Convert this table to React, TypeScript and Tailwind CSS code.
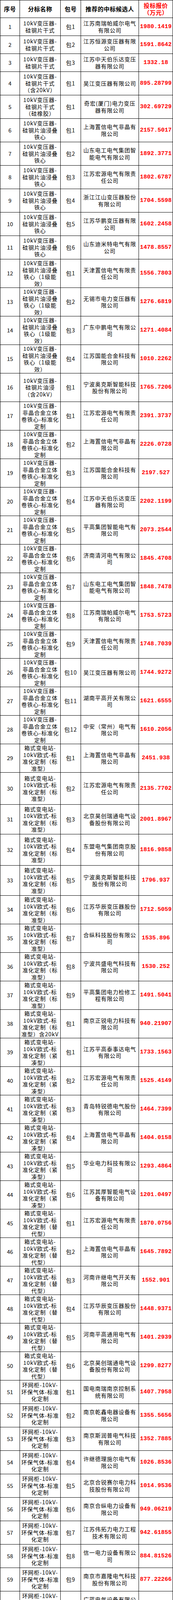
import React from "react";

type Row = [number, string, string, string, string];

const G_A = "10kV变压器-|硅钢片干式";
const G_OIL = "10kV变压器-|硅钢片油浸叠|铁心";
const G_OIL1 = "10kV变压器-|硅钢片油浸叠|铁心（1级能|效）";
const G_AM = "10kV变压器-|非晶合金立体|卷铁心-标准化|定制";
const G_BX = "箱式变电站-|10kV欧式-标|准化定制（标|准型）";
const G_JC = "箱式变电站-|10kV欧式-标|准化定制（紧|凑型）";
const G_TD = "箱式变电站-|10kV欧式-标|准化定制（替|代型）";
const G_HW = "环网柜-10kV-|环保气体-标准|化定制";
const G_HWZ = "环网柜-10kV-|环保气体-标准|化定制（含站|用变柜）";
const G_RH = "一二次融合成|套环网箱-环保|气体-标准化定|制";
const G_RHJ = "一二次融合成|套环网箱-环保|气体-标准化定|制（紧凑型）";

const rows: Row[] = [
  [1, G_A, "包1", "江苏南瑞帕威尔电气|有限公司", "1980.1419"],
  [2, G_A, "包2", "江苏恒源变压器有限|公司", "1591.8642"],
  [3, G_A, "包3", "江苏中天伯乐达变压|器有限公司", "1332.18"],
  [4, "10kV变压器-|硅钢片干式|（含20kV）", "包1", "吴江变压器有限公司", "895.28799"],
  [5, "10kV变压器-|硅钢片干式|（硅橡胶）", "包1", "奇宏(厦门)电力变压|器有限公司", "302.69729"],
  [6, G_OIL, "包1", "上海置信电气非晶有|限公司", "2157.5017"],
  [7, G_OIL, "包2", "山东电工电气集团智|能电气有限公司", "1892.3771"],
  [8, G_OIL, "包3", "江苏宏源电气有限责|任公司", "1802.6787"],
  [9, G_OIL, "包4", "浙江江山变压器股份|有限公司", "1704.5598"],
  [10, G_OIL, "包5", "江苏华鹏变压器有限|公司", "1602.2458"],
  [11, G_OIL, "包6", "山东迪米特电气有限|公司", "1478.8557"],
  [12, G_OIL1, "包1", "天津置信电气有限责|任公司", "1556.7803"],
  [13, G_OIL1, "包2", "无锡市电力变压器有|限公司", "1276.6819"],
  [14, G_OIL1, "包3", "广东中鹏电气有限公|司", "1271.4084"],
  [15, G_OIL1, "包4", "江苏国能合金科技有|限公司", "1010.2262"],
  [16, "10kV变压器-|硅钢片油浸|（含20kV）", "包1", "宁波奥克斯智能科技|股份有限公司", "1765.7206"],
  [17, G_AM, "包1", "江苏宏源电气有限责|任公司", "2391.3737"],
  [18, G_AM, "包2", "上海置信电气非晶有|限公司", "2226.0728"],
  [19, G_AM, "包3", "江苏国能合金科技有|限公司", "2197.527"],
  [20, G_AM, "包4", "江苏中天伯乐达变压|器有限公司", "2202.1199"],
  [21, G_AM, "包5", "平高集团智能电气有|限公司", "2073.2544"],
  [22, G_AM, "包6", "济南清河电气有限公|司", "1845.4708"],
  [23, G_AM, "包7", "山东电工电气集团智|能电气有限公司", "1848.7478"],
  [24, G_AM, "包8", "江苏南瑞帕威尔电气|有限公司", "1753.5723"],
  [25, G_AM, "包9", "天津置信电气有限责|任公司", "1748.7039"],
  [26, G_AM, "包10", "吴江变压器有限公司", "1744.9272"],
  [27, G_AM, "包11", "湖南平高开关有限公|司", "1621.6555"],
  [28, G_AM, "包12", "中安（常州）电气有|限公司", "1610.2056"],
  [29, G_BX, "包1", "上海置信电气非晶有|限公司", "2451.938"],
  [30, G_BX, "包2", "江苏宏源电气有限责|任公司", "2135.7702"],
  [31, G_BX, "包3", "北京昊创瑞通电气设|备股份有限公司", "2001.8967"],
  [32, G_BX, "包4", "东盟电气集团南京股|份有限公司", "1816.9858"],
  [33, G_BX, "包5", "宁波奥克斯智能科技|股份有限公司", "1796.937"],
  [34, G_BX, "包6", "江苏华辰变压器股份|有限公司", "1712.5059"],
  [35, G_BX, "包7", "合纵科技股份有限公|司", "1535.896"],
  [36, G_BX, "包8", "宁波共盛电气科技有|限公司", "1530.252"],
  [37, G_BX, "包9", "平高集团电力检修工|程有限公司", "1491.5041"],
  [38, "箱式变电站-|10kV欧式-标|准化定制（标|准型）含20kV", "包1", "南京正锐电力科技有|限公司", "940.21907"],
  [39, G_JC, "包1", "江苏平高泰事达电气|有限公司", "1733.1563"],
  [40, G_JC, "包2", "江苏宏源电气有限责|任公司", "1525.4149"],
  [41, G_JC, "包3", "青岛特锐德电气股份|有限公司", "1464.7399"],
  [42, G_JC, "包4", "上海置信电气非晶有|限公司", "1404.0158"],
  [43, G_JC, "包5", "华业电力科技有限公|司", "1293.4864"],
  [44, G_JC, "包6", "江苏其厚智能电气设|备有限公司", "1201.0497"],
  [45, G_TD, "包1", "江苏宏源电气有限责|任公司", "1870.0756"],
  [46, G_TD, "包2", "上海置信电气非晶有|限公司", "1645.7892"],
  [47, G_TD, "包3", "河南许继电气开关有|限公司", "1552.901"],
  [48, G_TD, "包4", "江苏华辰变压器股份|有限公司", "1448.9371"],
  [49, G_TD, "包5", "河南平高通用电气有|限公司", "1401.2939"],
  [50, G_TD, "包6", "北京昊创瑞通电气设|备股份有限公司", "1299.8277"],
  [51, G_HW, "包1", "国电南瑞南京控制系|统有限公司", "1407.7958"],
  [52, G_HW, "包2", "南京乾鑫电器设备有|限公司", "1355.5656"],
  [53, G_HW, "包3", "南京斯润普电气科技|有限公司", "1352.7885"],
  [54, G_HW, "包4", "许继德理施尔电气有|限公司", "1026.8536"],
  [55, G_HW, "包5", "北京合锐赛尔电力科|技股份有限公司", "1014.9536"],
  [56, G_HW, "包6", "南京合纵电力设备有|限公司", "949.06219"],
  [57, G_HW, "包7", "江苏伟拓力电力工程|技术有限公司", "942.61855"],
  [58, G_HW, "包8", "信一电力设备有限公|司", "884.81526"],
  [59, G_HW, "包9", "南京市嘉隆电气科技|股份有限公司", "877.22266"],
  [60, G_HW, "包10", "广蓝电气设备有限公|司", "812.06207"],
  [61, G_HW, "包11", "江苏优家宁科技有限|公司", "805.55756"],
  [62, G_HW, "包12", "上海天洲电器集团有|限公司", "810.41721"],
  [63, G_HW, "包13", "河南平高通用电气有|限公司", "680.97167"],
  [64, G_HW, "包14", "江苏镇安电力设备有|限公司", "676.74254"],
  [65, G_HWZ, "包1", "南京南瑞继保工程技|术有限公司", "855.45"],
  [66, G_HWZ, "包2", "北京四方继保工程技|术有限公司", "738.92022"],
  [67, G_HWZ, "包3", "长园电力技术有限公|司", "669.79733"],
  [68, "环网柜-20kV", "包1", "深圳市蓝希望电子有|限公司", "1390.0994"],
  [69, "环网柜-20kV", "包2", "苏州达博思智能电网|装备制造有限公司", "950.91805"],
  [70, "环网箱-20kV", "包1", "浙江聚弘凯智能电气|股份有限公司", "1385.9529"],
  [71, "环网箱-20kV", "包2", "珠海沃顿电气有限公|司", "1333.5"],
  [72, "环网箱-20kV", "包3", "库柏爱迪生（平顶|山）电子科技有限公|司", "1070.137"],
  [73, "环网箱-20kV", "包4", "上海联众电力科技有|限公司", "817.84315"],
  [74, "环网箱-20kV", "包5", "南京亚电电力自动化|有限公司", "811.93001"],
  [75, G_RH, "包1", "南京南瑞继保工程技|术有限公司", "2403.5499"],
  [76, G_RH, "包2", "国电南京自动化股份|有限公司", "2224.95"],
  [77, G_RH, "包3", "国电南瑞南京控制系|统有限公司", "2060.0205"],
  [78, G_RH, "包4", "扬州德云电气设备集|团有限公司", "2022.0249"],
  [79, G_RH, "包5", "鼎圣集团有限公司", "1995.7107"],
  [80, G_RH, "包6", "湖北网安科技有限公|司", "1809.2894"],
  [81, G_RH, "包7", "上海天洲电器集团有|限公司", "1804.2423"],
  [82, G_RH, "包8", "广东欧文特电气有限|公司", "1770.2633"],
  [83, G_RH, "包9", "许继德理施尔电气有|限公司", "1754.1555"],
  [84, G_RH, "包10", "江苏恒炫电气有限公|司", "1732.3345"],
  [85, G_RH, "包11", "陆牌电气科技有限公|司", "1701.474"],
  [86, G_RH, "包12", "苏州顶地电气成套有|限公司", "1689.8472"],
  [87, G_RH, "包13", "科大智能电气技术有|限公司", "1666.6402"],
  [88, G_RH, "包14", "江苏大烨智能电气股|份有限公司", "1623.9994"],
  [89, G_RH, "包15", "江苏新纪元电器科技|有限公司", "1583.2985"],
  [90, G_RH, "包16", "江苏金智科技股份有|限公司", "1599.0932"],
  [91, G_RH, "包17", "江苏镇安电力设备有|限公司", "1562.1724"],
  [92, G_RH, "包18", "南京合纵电力设备有|限公司", "1555.572"],
  [93, G_RH, "包19", "南京市嘉隆电气科技|股份有限公司", "1521.3224"],
  [94, G_RH, "包20", "江苏江阴华明电气设|备有限公司", "1503.441"],
  [95, G_RH, "包21", "江苏扬开电力设备股|份有限公司", "1484.3843"],
  [96, G_RH, "包22", "江苏伟拓力电力工程|技术有限公司", "1485.4352"],
  [97, G_RH, "包23", "安徽龙波电气有限公|司", "1458.7663"],
  [98, G_RH, "包24", "美仪电气有限公司", "1392.7648"],
  [99, G_RH, "包25", "广蓝电气设备有限公|司", "1359.7368"],
  [100, G_RH, "包26", "苏州工业园区和顺电|气股份有限公司", "1347.3584"],
  [101, G_RHJ, "包1", "江苏平高泰事达电气|有限公司", "1774.4584"],
  [102, G_RHJ, "包2", "江苏南瑞恒驰电气装|备有限公司", "1759.7902"],
  [103, G_RHJ, "包3", "珠海许继电气有限公|司", "1601.0691"],
  [104, G_RHJ, "包4", "江苏镇德电力设备有|限公司", "1551.3569"],
  [105, G_RHJ, "包5", "星玛智能电气有限公|司", "1485.121"],
  [106, G_RHJ, "包6", "江苏米格电气集团股|份有限公司", "1437.0786"],
  [107, G_RHJ, "包7", "吉林省金冠电气股份|有限公司", "1319.6154"],
  [108, G_RHJ, "包8", "格立特电气有限公司", "1270.7433"],
  [109, G_RHJ, "包9", "浙江易汇电力设备有|限公司", "1207.4609"],
  [110, G_RHJ, "包10", "铭祺电气有限公司", "1157.4787"],
];

function heightClass(n: number): string {
  if ((n >= 1 && n <= 3) || (n >= 68 && n <= 74)) return "h-[46px]";
  if ((n >= 4 && n <= 11) || (n >= 51 && n <= 64)) return "h-[60px]";
  if (n === 30) return "h-[82px]";
  if (n === 31) return "h-[76px]";
  if (n === 32) return "h-[80px]";
  if (n === 33) return "h-[77px]";
  return "h-[73px]";
}

const cellBase =
  "flex flex-col items-center border-r border-b border-black overflow-hidden";

function Lines({ text }: { text: string }) {
  return (
    <>
      {text.split("|").map((l, i) => (
        <span key={i} className="block whitespace-nowrap">
          {l}
        </span>
      ))}
    </>
  );
}

export default function App() {
  return (
    <div className="w-[442px] bg-white font-['Noto_Sans_CJK_SC',sans-serif] text-[14px] leading-[17.5px] tracking-[1px] text-black">
      <div className="border-l border-t border-black">
        <div className="grid h-[45px] grid-cols-[50px_104px_52px_148px_87px] text-[15px] font-bold leading-[18px] tracking-[0.5px]">
          <div className={`${cellBase} justify-center`}>序号</div>
          <div className={`${cellBase} justify-center`}>分标名称</div>
          <div className={`${cellBase} justify-center`}>包号</div>
          <div className={`${cellBase} justify-center`}>推荐的中标候选人</div>
          <div className={`${cellBase} justify-center text-[#ff0000]`}>
            <span className="block">投标报价</span>
            <span className="block">（万元）</span>
          </div>
        </div>
        {rows.map(([n, name, pkg, company, price]) => (
          <div
            key={n}
            className={`grid grid-cols-[50px_104px_52px_148px_87px] ${heightClass(n)}`}
          >
            <div className={`${cellBase} justify-center tracking-[0px]`}>{n}</div>
            <div className={`${cellBase} justify-center`}>
              <Lines text={name} />
            </div>
            <div className={`${cellBase} justify-center`}>{pkg}</div>
            <div
              className={`${cellBase} ${n === 72 ? "justify-start" : "justify-center"}`}
            >
              <Lines text={company} />
            </div>
            <div
              className={`${cellBase} justify-center font-['Liberation_Mono',monospace] text-[15px] font-bold tracking-[0px] text-[#ff0000]`}
            >
              {price}
            </div>
          </div>
        ))}
      </div>
    </div>
  );
}
